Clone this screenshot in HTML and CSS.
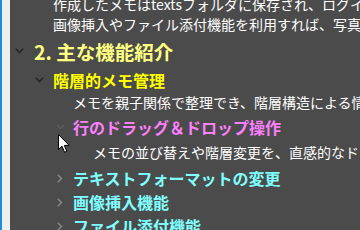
FILE: index.html
```html
<!DOCTYPE html>
<html lang="ja">
<head>
<meta charset="utf-8">
<link rel="stylesheet" href="styles.css">
</head>
<body>
<div class="frame">
  <div class="edge"></div>
  <div class="gutter"></div>
  <div class="doc">
    <div class="row body r1 l1"><span class="sp"></span><span class="txt">作成したメモはtextsフォルダに保存され、ログイン</span></div>
    <div class="row body r2 l1"><span class="sp"></span><span class="txt">画像挿入やファイル添付機能を利用すれば、写真</span></div>
    <div class="row h1 l0"><span class="chev"><svg width="9" height="6" viewBox="0 0 9 6"><polyline points="0.8,0.8 4.5,4.5 8.2,0.8" fill="none" stroke="#262626" stroke-width="1.6"/></svg></span><span class="txt">2. 主な機能紹介</span></div>
    <div class="row h2 l1"><span class="chev"><svg width="9" height="6" viewBox="0 0 9 6"><polyline points="0.8,0.8 4.5,4.5 8.2,0.8" fill="none" stroke="#262626" stroke-width="1.6"/></svg></span><span class="txt">階層的メモ管理</span></div>
    <div class="row body r5 l2"><span class="sp"></span><span class="txt">メモを親子関係で整理でき、階層構造による情報</span></div>
    <div class="row h3 pink l2"><span class="chev"><svg width="9" height="6" viewBox="0 0 9 6"><polyline points="0.8,0.8 4.5,4.5 8.2,0.8" fill="none" stroke="#5c5c5c" stroke-width="1.4"/></svg></span><span class="txt">行のドラッグ＆ドロップ操作</span></div>
    <div class="row body r7 l3"><span class="sp"></span><span class="txt">メモの並び替えや階層変更を、直感的なドラ</span></div>
    <div class="row h3 cyan first l2"><span class="chev"><svg width="6" height="9" viewBox="0 0 6 9"><polyline points="0.8,0.8 4.5,4.5 0.8,8.2" fill="none" stroke="#8a8a8a" stroke-width="1.4"/></svg></span><span class="txt">テキストフォーマットの変更</span></div>
    <div class="row h3 cyan l2"><span class="chev"><svg width="6" height="9" viewBox="0 0 6 9"><polyline points="0.8,0.8 4.5,4.5 0.8,8.2" fill="none" stroke="#8a8a8a" stroke-width="1.4"/></svg></span><span class="txt">画像挿入機能</span></div>
    <div class="row h3 cyan l2"><span class="chev"><svg width="6" height="9" viewBox="0 0 6 9"><polyline points="0.8,0.8 4.5,4.5 0.8,8.2" fill="none" stroke="#8a8a8a" stroke-width="1.4"/></svg></span><span class="txt">ファイル添付機能</span></div>
  </div>
  <svg class="cursor" width="13" height="20" viewBox="0 0 13 20"><path d="M0.5,0.5 L0.5,15.5 L4,12.2 L6.6,18.3 L8.8,17.3 L6.3,11.4 L11.2,11.4 Z" fill="#ffffff" stroke="#000000" stroke-width="1"/></svg>
</div>
</body>
</html>
```

FILE: styles.css
```css
html, body {
  margin: 0;
  padding: 0;
  width: 360px;
  height: 230px;
  overflow: hidden;
  background: #4b4b4b;
}
.frame {
  position: relative;
  display: flex;
  width: 360px;
  height: 230px;
  overflow: hidden;
}
.edge {
  width: 2px;
  flex: none;
  background: #1a8fd8;
}
.gutter {
  width: 8px;
  flex: none;
  background: #efefef;
}
.doc {
  flex: 1;
  display: flex;
  flex-direction: column;
  margin-top: -6px;
  font-family: "Noto Sans CJK JP", "Noto Sans", sans-serif;
  color: #ffffff;
  white-space: nowrap;
  min-width: 0;
}
.row {
  display: flex;
  align-items: center;
  flex: none;
}
.l0 { padding-left: 0; }
.l1 { padding-left: 20px; }
.l2 { padding-left: 40px; }
.l3 { padding-left: 60px; }
.sp, .chev {
  width: 23px;
  flex: none;
  display: flex;
  align-items: center;
}
.chev svg { margin-left: 5px; display: block; }
.h1 .sp, .h1 .chev { width: 24px; }
.body {
  height: 20px;
  line-height: 20px;
  font-size: 14px;
}
.h1 {
  height: 34px;
  font-size: 19.5px;
  font-weight: bold;
  color: #ffff80;
}
.h2 {
  height: 24px;
  font-size: 16px;
  font-weight: bold;
  color: #ffff00;
}
.h3 {
  height: 24px;
  font-size: 16px;
  font-weight: bold;
}
.pink {
  height: 30px;
  color: #ff80ff;
}
.cyan { color: #80ffff; }
.first { margin-top: 4px; }
.h3.pink .chev svg { margin-left: 6px; }
.cyan .chev svg { margin-left: 7px; }
.cursor {
  position: absolute;
  left: 58px;
  top: 134px;
}
```
